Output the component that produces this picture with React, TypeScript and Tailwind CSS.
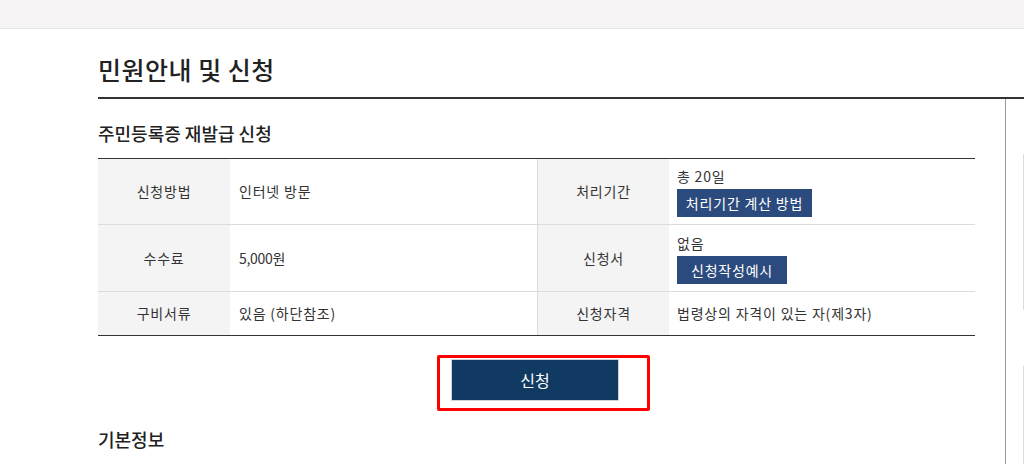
import { ReactNode } from 'react';

function Label({ children, divider }: { children: ReactNode; divider?: boolean }) {
  return (
    <div
      className={`flex items-center justify-center bg-[#f4f4f4] text-[#333] ${
        divider ? 'border-l border-[#dcdcdc]' : ''
      }`}
    >
      {children}
    </div>
  );
}

function SmallButton({ children, width }: { children: ReactNode; width: string }) {
  return (
    <button className={`mt-[3px] h-[28px] bg-[#2b4a7d] text-center text-[14px] leading-[28px] tracking-[0.8px] text-white ${width}`}>
      {children}
    </button>
  );
}

export default function App() {
  return (
    <div className="h-[464px] w-[1024px] overflow-hidden bg-white font-['Noto_Sans_CJK_KR','Noto_Sans',sans-serif] text-[#333]">
      {/* Top bar */}
      <div className="h-[29px] border-b border-[#e6e6e6] bg-[#f6f4f5]" />

      <div className="pl-[98px]">
        <h1 className="pt-[23px] pb-[11px] text-[25px] leading-[34px] font-medium tracking-[0.5px] text-[#222]">
          민원안내 및 신청
        </h1>

        <div className="border-t-2 border-[#333]">
          <div className="flex">
            {/* Main content */}
            <div className="w-[908px] border-r border-[#9a9a9a]">
              <h2 className="mt-[22px] mb-[13px] text-[18px] leading-[24px] font-medium text-[#222]">
                주민등록증 재발급 신청
              </h2>

              <div className="w-[877px] border-t border-b border-[#333] text-[14px] tracking-[0.8px]">
                {/* Row 1 */}
                <div className="grid h-[66px] grid-cols-[132px_307px_132px_1fr] border-b border-[#dcdcdc]">
                  <Label>신청방법</Label>
                  <div className="flex items-center pl-[9px]">인터넷 방문</div>
                  <Label divider>처리기간</Label>
                  <div className="flex flex-col items-start justify-center pl-2">
                    <span className="leading-[20px]">총 20일</span>
                    <SmallButton width="w-[135px]">처리기간 계산 방법</SmallButton>
                  </div>
                </div>
                {/* Row 2 */}
                <div className="grid h-[67px] grid-cols-[132px_307px_132px_1fr] border-b border-[#dcdcdc]">
                  <Label>수수료</Label>
                  <div className="flex items-center pl-[9px] tracking-[-0.3px]">5,000원</div>
                  <Label divider>신청서</Label>
                  <div className="flex flex-col items-start justify-center pl-2">
                    <span className="leading-[20px]">없음</span>
                    <SmallButton width="w-[110px]">신청작성예시</SmallButton>
                  </div>
                </div>
                {/* Row 3 */}
                <div className="grid h-[43px] grid-cols-[132px_307px_132px_1fr]">
                  <Label>구비서류</Label>
                  <div className="flex items-center pl-[9px]">있음 (하단참조)</div>
                  <Label divider>신청자격</Label>
                  <div className="flex items-center pl-2">법령상의 자격이 있는 자(제3자)</div>
                </div>
              </div>

              <div className="flex w-[877px] justify-center pt-[23px] pr-[3px]">
                <div className="relative">
                  <button className="h-[42px] w-[168px] border border-[#d0d4da] bg-[#103a62] text-[16px] text-white">
                    신청
                  </button>
                  {/* red highlight annotation */}
                  <div className="pointer-events-none absolute top-[-4px] right-[-31px] bottom-[-10px] left-[-14px] rounded-[2px] border-[3px] border-[#ff0000]" />
                </div>
              </div>

              <h2 className="mt-[25px] text-[18px] leading-[26px] font-medium text-[#222]">기본정보</h2>
            </div>

            {/* Right edge panel */}
            <div className="flex-1">
              <div className="mt-[55px] h-[156px] border-r border-[#dddddd]" />
              <div className="mt-[56px] h-[100px] border-r border-[#dddddd]" />
            </div>
          </div>
        </div>
      </div>
    </div>
  );
}
